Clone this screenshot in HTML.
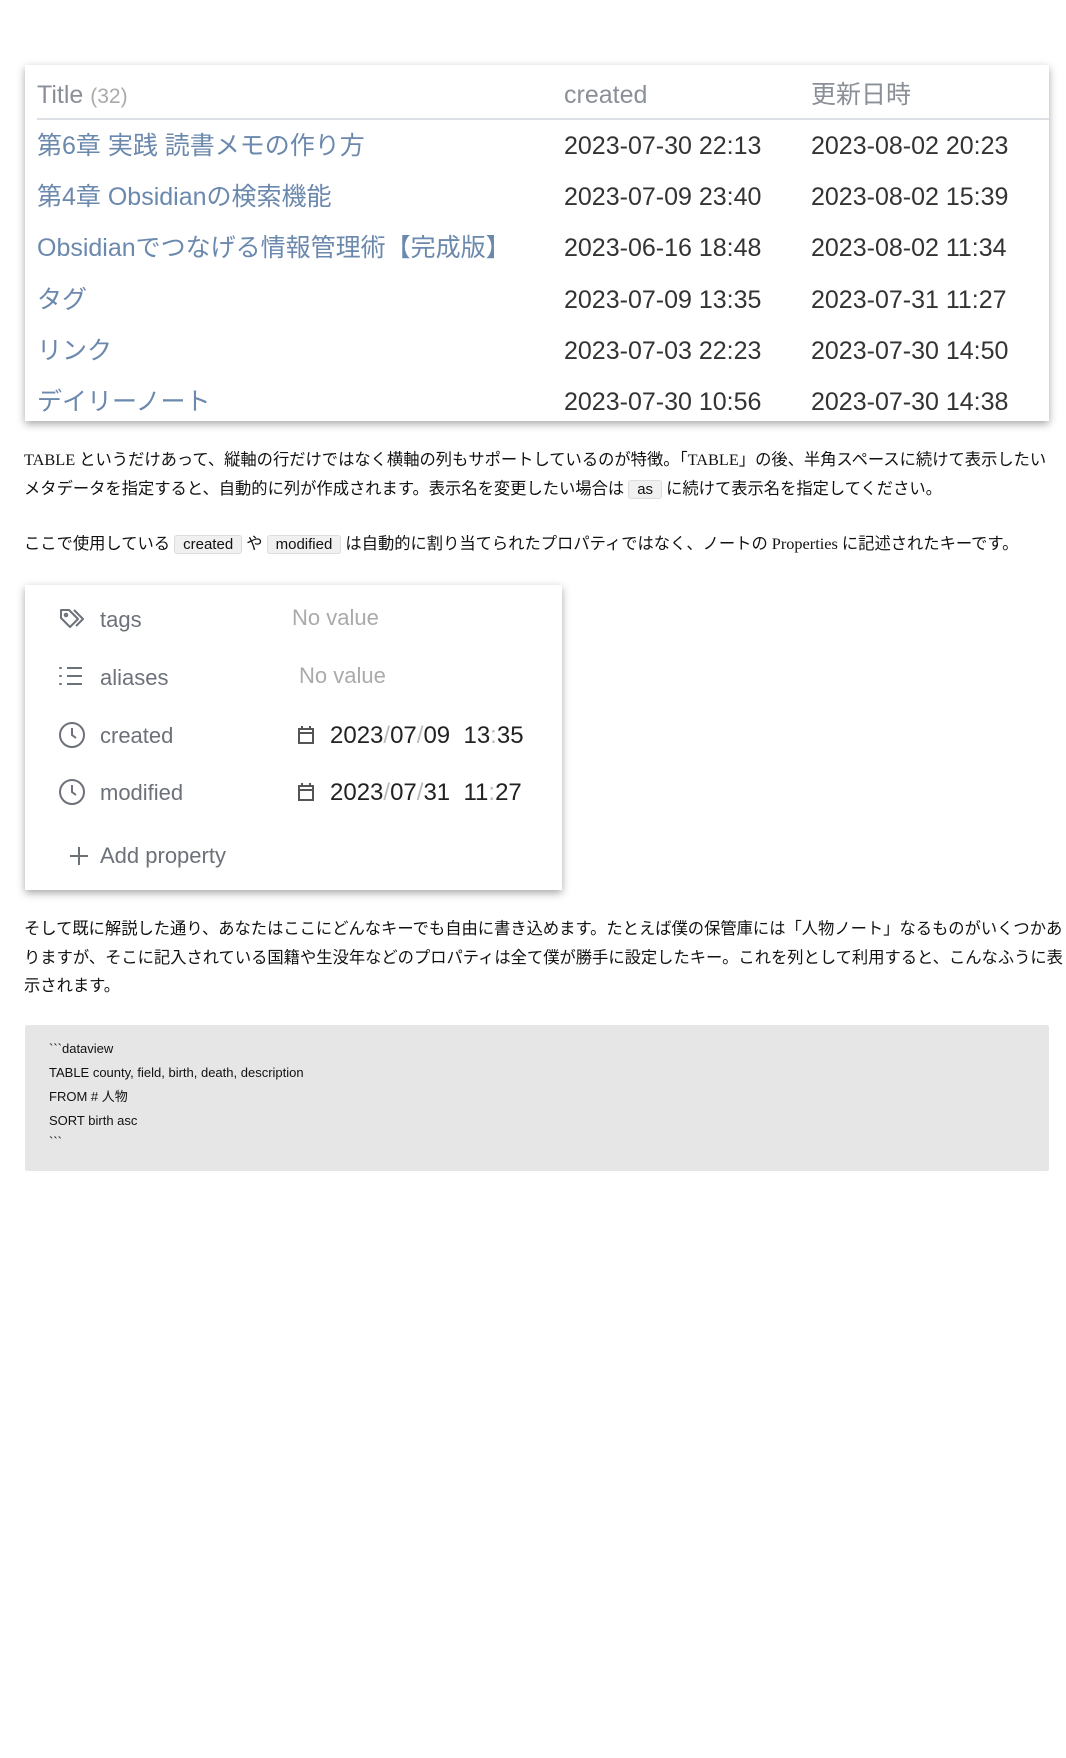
<!DOCTYPE html>
<html><head><meta charset="utf-8">
<style>
body{margin:0;width:1066px;height:1758px;background:#fff;position:relative;overflow:hidden;font-family:"Liberation Serif","Noto Sans CJK JP",serif;}
.a{position:absolute;white-space:nowrap;}
.tbl{position:absolute;left:25px;top:65px;width:1024px;height:356px;background:#fff;box-shadow:0 3px 8px rgba(0,0,0,.35);overflow:hidden;}
.tbl .a{font-family:"Liberation Sans","Noto Sans CJK JP",sans-serif;font-size:25px;line-height:30px;}
.t{color:#6b88ad;left:12px;}
.d{color:#333;}
.h{color:#8a8f98;}
.p{font-size:16.3px;color:#111;line-height:29px;left:24px;}
code{font-family:"Liberation Sans",sans-serif;font-size:15px;background:#f0f0f0;border:1px solid #ddd;border-radius:3px;padding:0 8px;}
.card{position:absolute;left:25px;top:585px;width:537px;height:305px;background:#fff;box-shadow:0 3px 8px rgba(0,0,0,.35);}
.card .a{font-family:"Liberation Sans",sans-serif;font-size:22px;line-height:26px;}
.lab{color:#6d7179;left:75px;}
.nv{color:#aaa;}
.val{color:#222;}
.cbg{position:absolute;left:25px;top:1025px;width:1024px;height:146px;background:#e6e6e6;border-radius:2px;}
.cl{position:absolute;white-space:nowrap;font-family:"Liberation Sans","Noto Sans CJK JP",sans-serif;font-size:13px;line-height:16px;color:#111;left:49px;}
</style></head><body>
<div class="tbl">
<div class="a h" style="left:12px;top:15px">Title <span style="color:#aaa;font-size:21px">(32)</span></div>
<div class="a h" style="left:539px;top:15px">created</div>
<div class="a h" style="left:786px;top:15px">更新日時</div>
<div style="position:absolute;left:12px;right:0;top:53px;height:2px;background:#dde0e4"></div>
<div class="a t" style="top:66px">第6章 実践 読書メモの作り方</div><div class="a d" style="left:539px;top:66px">2023-07-30 22:13</div><div class="a d" style="left:786px;top:66px">2023-08-02 20:23</div>
<div class="a t" style="top:117px">第4章 Obsidianの検索機能</div><div class="a d" style="left:539px;top:117px">2023-07-09 23:40</div><div class="a d" style="left:786px;top:117px">2023-08-02 15:39</div>
<div class="a t" style="top:168px">Obsidianでつなげる情報管理術【完成版】</div><div class="a d" style="left:539px;top:168px">2023-06-16 18:48</div><div class="a d" style="left:786px;top:168px">2023-08-02 11:34</div>
<div class="a t" style="top:220px">タグ</div><div class="a d" style="left:539px;top:220px">2023-07-09 13:35</div><div class="a d" style="left:786px;top:220px">2023-07-31 11:27</div>
<div class="a t" style="top:271px">リンク</div><div class="a d" style="left:539px;top:271px">2023-07-03 22:23</div><div class="a d" style="left:786px;top:271px">2023-07-30 14:50</div>
<div class="a t" style="top:322px">デイリーノート</div><div class="a d" style="left:539px;top:322px">2023-07-30 10:56</div><div class="a d" style="left:786px;top:322px">2023-07-30 14:38</div>
</div>

<div class="a p" style="top:445px">TABLE というだけあって、縦軸の行だけではなく横軸の列もサポートしているのが特徴。「TABLE」の後、半角スペースに続けて表示したい</div>
<div class="a p" style="top:474px">メタデータを指定すると、自動的に列が作成されます。表示名を変更したい場合は <code>as</code> に続けて表示名を指定してください。</div>
<div class="a p" style="top:529px">ここで使用している <code>created</code> や <code>modified</code> は自動的に割り当てられたプロパティではなく、ノートの Properties に記述されたキーです。</div>

<div class="card">
<svg class="a" style="left:33px;top:22px" width="28" height="24" viewBox="0 0 28 24" fill="none" stroke="#6d7179" stroke-width="2" stroke-linejoin="round"><path d="M3 3h8l9 9-8 8-9-9z"/><circle cx="8" cy="8" r="1.3"/><path d="M16 3l9 9-7 7"/></svg>
<div class="a lab" style="top:22px">tags</div><div class="a nv" style="left:267px;top:20px">No value</div>
<svg class="a" style="left:33px;top:80px" width="26" height="22" viewBox="0 0 26 22" stroke="#6d7179" stroke-width="2"><path d="M9 3h15M9 11h15M9 19h15"/><path d="M2 3h1M2 11h1M2 19h1" stroke-linecap="round"/></svg>
<div class="a lab" style="top:80px">aliases</div><div class="a nv" style="left:274px;top:78px">No value</div>
<svg class="a" style="left:33px;top:136px" width="28" height="28" viewBox="0 0 28 28" fill="none" stroke="#6d7179" stroke-width="2"><circle cx="14" cy="14" r="12"/><path d="M14 7v7l4 3"/></svg>
<div class="a lab" style="top:138px">created</div>
<svg class="a" style="left:272px;top:140px" width="18" height="20" viewBox="0 0 18 20" fill="none" stroke="#555" stroke-width="2"><rect x="2" y="4" width="14" height="14"/><path d="M2 8h14M5 1v4M13 1v4"/></svg>
<div class="a val" style="left:305px;top:138px;font-size:24px">2023<span style="color:#bbb">/</span>07<span style="color:#bbb">/</span>09&nbsp; 13<span style="color:#bbb">:</span>35</div>
<svg class="a" style="left:33px;top:193px" width="28" height="28" viewBox="0 0 28 28" fill="none" stroke="#6d7179" stroke-width="2"><circle cx="14" cy="14" r="12"/><path d="M14 7v7l4 3"/></svg>
<div class="a lab" style="top:195px">modified</div>
<svg class="a" style="left:272px;top:197px" width="18" height="20" viewBox="0 0 18 20" fill="none" stroke="#555" stroke-width="2"><rect x="2" y="4" width="14" height="14"/><path d="M2 8h14M5 1v4M13 1v4"/></svg>
<div class="a val" style="left:305px;top:195px;font-size:24px">2023<span style="color:#bbb">/</span>07<span style="color:#bbb">/</span>31&nbsp; 11<span style="color:#bbb">:</span>27</div>
<svg class="a" style="left:43px;top:260px" width="22" height="22" viewBox="0 0 22 22" stroke="#6d7179" stroke-width="2"><path d="M11 2v18M2 11h18"/></svg>
<div class="a lab" style="top:258px">Add property</div>
</div>

<div class="a p" style="top:914px">そして既に解説した通り、あなたはここにどんなキーでも自由に書き込めます。たとえば僕の保管庫には「人物ノート」なるものがいくつかあ</div>
<div class="a p" style="top:943px">りますが、そこに記入されている国籍や生没年などのプロパティは全て僕が勝手に設定したキー。これを列として利用すると、こんなふうに表</div>
<div class="a p" style="top:971px">示されます。</div>

<div class="cbg"></div>
<div class="cl" style="top:1041px">&#96;&#96;&#96;dataview</div>
<div class="cl" style="top:1065px">TABLE county, field, birth, death, description</div>
<div class="cl" style="top:1089px">FROM # 人物</div>
<div class="cl" style="top:1113px">SORT birth asc</div>
<div class="cl" style="top:1134px">&#96;&#96;&#96;</div>
</body></html>
